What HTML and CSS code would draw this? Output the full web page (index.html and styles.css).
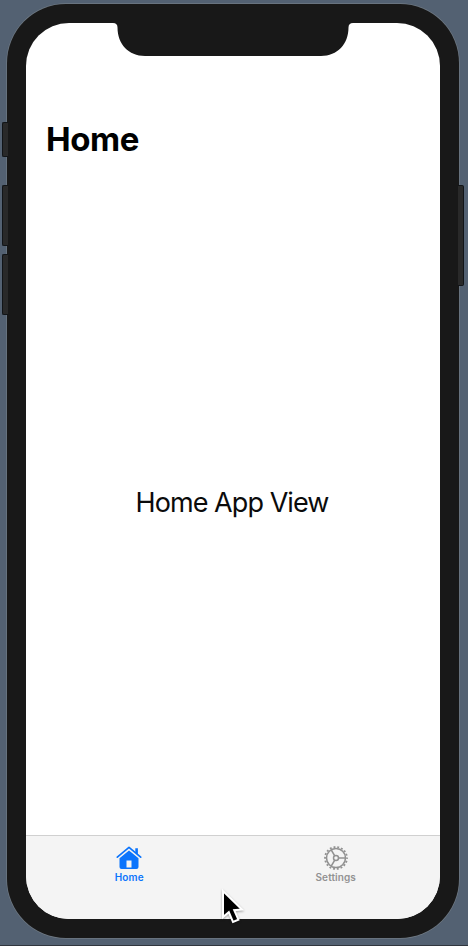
FILE: index.html
```html
<!DOCTYPE html>
<html lang="en">
<head>
<meta charset="utf-8">
<title>Home</title>
<link rel="stylesheet" href="styles.css">
</head>
<body>
<div class="phone">
  <span class="side-button mute"></span>
  <span class="side-button volume-up"></span>
  <span class="side-button volume-down"></span>
  <span class="side-button power"></span>
  <div class="screen">
    <header class="header"><h1 class="title">Home</h1></header>
    <main class="content"><p class="message">Home App View</p></main>
    <nav class="tabs">
      <a class="tab active">
        <svg class="icon" width="28" height="26" viewBox="0 0 28 26">
          <path fill-rule="evenodd" d="M4.500 13.200 14 5.500l9.500 7.700V22q0 2-2 2h-15q-2 0-2-2zM11.500 15.500v7h5v-7z" fill="currentColor"/>
          <path d="M2.300 12.200 14 2.400l11.700 9.800" fill="none" stroke="currentColor" stroke-width="1.700" stroke-linecap="round" stroke-linejoin="round"/>
          <path d="M20.300 3.300h2.600v6.200l-2.600-2.200z" fill="currentColor"/>
        </svg>
        <span class="label">Home</span>
      </a>
      <a class="tab">
        <svg class="icon" width="28" height="26" viewBox="0 0 28 26">
          <g fill="none" stroke="currentColor">
            <circle cx="14" cy="13" r="11" stroke-width="1.800" stroke-dasharray="1.900 1.939" stroke-dashoffset=".95"/>
            <circle cx="14" cy="13" r="9.500" stroke-width="1.600"/>
            <circle cx="14" cy="13" r="2.500" stroke-width="1.500"/>
            <path d="M16.500 13h7M12.750 10.850 9.200 4.800M12.750 15.150 9.200 21.200" stroke-width="1.600"/>
          </g>
        </svg>
        <span class="label">Settings</span>
      </a>
    </nav>
  </div>
  <svg class="notch" width="242" height="34" viewBox="0 0 242 34">
    <path d="M0 0h242v1h-1q-4.500 0-4.500 4.500C236.500 22 225.500 34 209 34H33C16.500 34 5.500 22 5.500 5.500Q5.500 1 1 1H0z" fill="#181818"/>
  </svg>
</div>
<svg class="cursor" width="30" height="40" viewBox="0 0 30 40">
  <path d="M4 4v26l5.800-4.800 4.200 9.800 5.400-2.300-4.200-9.500 7.800-.7z" fill="#000" stroke="#fff" stroke-width="2"/>
</svg>
</body>
</html>
```
FILE: styles.css
```css
* { box-sizing: border-box; }

body {
  margin: 0;
  height: 946px;
  overflow: hidden;
  padding: 4px 9px 0 7px;
  background: #536172;
  border-bottom: 1px solid #30363e;
  font-family: Inter, "Liberation Sans", sans-serif;
}

.phone {
  position: relative;
  height: 934px;
  padding: 19px;
  border-radius: 59px;
  background: #181818;
  box-shadow: 0 0 0 .7px #707a84;
}

.screen {
  display: flex;
  flex-direction: column;
  height: 896px;
  overflow: hidden;
  border-radius: 43px;
  background: #fff;
}

.header { padding: 95px 20px 0; }

.title {
  margin: 0;
  font-size: 33px;
  line-height: 42px;
  font-weight: 700;
  letter-spacing: -.4px;
}

.content {
  flex: 1;
  display: flex;
  align-items: center;
  justify-content: center;
  padding: 11px 2px 0 0;
}

.message {
  margin: 0;
  font-size: 27px;
  line-height: 34px;
  letter-spacing: -.93px;
  color: #0b0b0b;
}

.tabs {
  display: flex;
  height: 84px;
  padding-right: 1px;
  border-top: 1px solid #d0d0d0;
  background: #f4f4f4;
}

.tab {
  flex: 1;
  display: flex;
  flex-direction: column;
  align-items: center;
  padding-top: 9px;
  color: #929292;
}

.active { color: #0b74fc; }

.icon { display: block; }

.label {
  font-size: 10px;
  line-height: 12px;
  font-weight: 600;
  letter-spacing: .1px;
}

.notch {
  position: absolute;
  top: 18px;
  left: 105px;
}

.side-button {
  position: absolute;
  left: -5px;
  width: 6px;
  border: 1px solid #111417;
  border-right: 0;
  border-radius: 2px 0 0 2px;
  background: #292929;
}

.mute { top: 118px; height: 35px; }
.volume-up { top: 181px; height: 61px; }
.volume-down { top: 250px; height: 61px; }

.power {
  top: 181px;
  left: auto;
  right: -5px;
  height: 101px;
  border: 1px solid #111417;
  border-left: 0;
  border-radius: 0 2px 2px 0;
}

.cursor {
  position: absolute;
  left: 219px;
  top: 887px;
  filter: drop-shadow(0 1px 1px rgba(0, 0, 0, .35));
}
```
